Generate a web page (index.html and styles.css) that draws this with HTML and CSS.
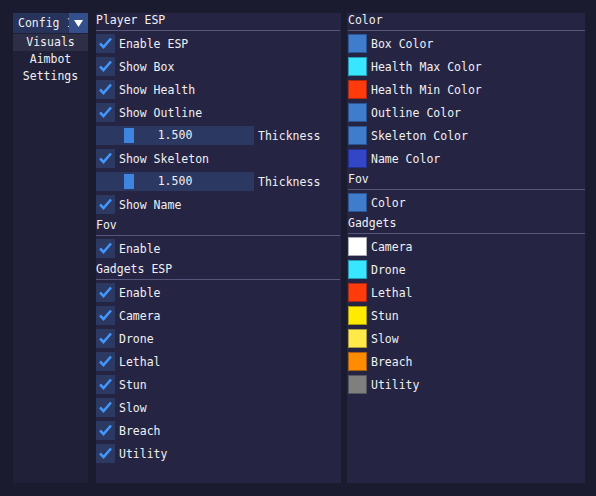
FILE: index.html
```html
<!DOCTYPE html>
<html lang="en">
<head>
    <meta charset="UTF-8">
    <meta name="viewport" content="width=device-width, initial-scale=1.0">
    <title>Menu</title>
    <link rel="stylesheet" href="styles.css">
</head>
<body>
    <div class="window">
        <div class="sidebar">
            <div class="combo">
                <span class="combo-text">Config 1</span>
                <span class="combo-btn">
                    <svg width="9" height="7" viewBox="0 0 9 7"><polygon points="0,0 9,0 4.5,7" fill="#ffffff"/></svg>
                </span>
            </div>
            <ul class="tabs">
                <li class="active">Visuals</li>
                <li>Aimbot</li>
                <li>Settings</li>
            </ul>
        </div>

        <div class="panel">
            <div class="heading">Player ESP</div>
            <div class="sep"></div>
            <div class="row"><span class="check"><svg viewBox="0 0 19 19"><polyline points="4,9.5 7.5,13 15,4.5"/></svg></span>Enable ESP</div>
            <div class="row"><span class="check"><svg viewBox="0 0 19 19"><polyline points="4,9.5 7.5,13 15,4.5"/></svg></span>Show Box</div>
            <div class="row"><span class="check"><svg viewBox="0 0 19 19"><polyline points="4,9.5 7.5,13 15,4.5"/></svg></span>Show Health</div>
            <div class="row"><span class="check"><svg viewBox="0 0 19 19"><polyline points="4,9.5 7.5,13 15,4.5"/></svg></span>Show Outline</div>
            <div class="row">
                <div class="slider"><span class="grab" style="left: 28px"></span>1.500</div>Thickness
            </div>
            <div class="row"><span class="check"><svg viewBox="0 0 19 19"><polyline points="4,9.5 7.5,13 15,4.5"/></svg></span>Show Skeleton</div>
            <div class="row">
                <div class="slider"><span class="grab" style="left: 28px"></span>1.500</div>Thickness
            </div>
            <div class="row"><span class="check"><svg viewBox="0 0 19 19"><polyline points="4,9.5 7.5,13 15,4.5"/></svg></span>Show Name</div>

            <div class="heading">Fov</div>
            <div class="sep"></div>
            <div class="row"><span class="check"><svg viewBox="0 0 19 19"><polyline points="4,9.5 7.5,13 15,4.5"/></svg></span>Enable</div>

            <div class="heading">Gadgets ESP</div>
            <div class="sep"></div>
            <div class="row"><span class="check"><svg viewBox="0 0 19 19"><polyline points="4,9.5 7.5,13 15,4.5"/></svg></span>Enable</div>
            <div class="row"><span class="check"><svg viewBox="0 0 19 19"><polyline points="4,9.5 7.5,13 15,4.5"/></svg></span>Camera</div>
            <div class="row"><span class="check"><svg viewBox="0 0 19 19"><polyline points="4,9.5 7.5,13 15,4.5"/></svg></span>Drone</div>
            <div class="row"><span class="check"><svg viewBox="0 0 19 19"><polyline points="4,9.5 7.5,13 15,4.5"/></svg></span>Lethal</div>
            <div class="row"><span class="check"><svg viewBox="0 0 19 19"><polyline points="4,9.5 7.5,13 15,4.5"/></svg></span>Stun</div>
            <div class="row"><span class="check"><svg viewBox="0 0 19 19"><polyline points="4,9.5 7.5,13 15,4.5"/></svg></span>Slow</div>
            <div class="row"><span class="check"><svg viewBox="0 0 19 19"><polyline points="4,9.5 7.5,13 15,4.5"/></svg></span>Breach</div>
            <div class="row"><span class="check"><svg viewBox="0 0 19 19"><polyline points="4,9.5 7.5,13 15,4.5"/></svg></span>Utility</div>
        </div>

        <div class="panel colors">
            <div class="heading">Color</div>
            <div class="sep"></div>
            <div class="row"><span class="swatch" style="background: #3f7ccb"></span>Box Color</div>
            <div class="row"><span class="swatch" style="background: #38e6ff"></span>Health Max Color</div>
            <div class="row"><span class="swatch" style="background: #ff3b0c"></span>Health Min Color</div>
            <div class="row"><span class="swatch" style="background: #3f7ccb"></span>Outline Color</div>
            <div class="row"><span class="swatch" style="background: #3f7ccb"></span>Skeleton Color</div>
            <div class="row"><span class="swatch" style="background: #3346c8"></span>Name Color</div>

            <div class="heading">Fov</div>
            <div class="sep"></div>
            <div class="row"><span class="swatch" style="background: #3f7ccb"></span>Color</div>

            <div class="heading">Gadgets</div>
            <div class="sep"></div>
            <div class="row"><span class="swatch" style="background: #ffffff"></span>Camera</div>
            <div class="row"><span class="swatch" style="background: #38e6ff"></span>Drone</div>
            <div class="row"><span class="swatch" style="background: #ff3b0c"></span>Lethal</div>
            <div class="row"><span class="swatch" style="background: #ffea00"></span>Stun</div>
            <div class="row"><span class="swatch" style="background: #ffea4a"></span>Slow</div>
            <div class="row"><span class="swatch" style="background: #ff8c00"></span>Breach</div>
            <div class="row"><span class="swatch" style="background: #7f7f7f"></span>Utility</div>
        </div>
    </div>
</body>
</html>
```

FILE: styles.css
```css
body {
    margin: 0;
    background-color: #1b1b30;
    color: #f0f0f2;
    font-family: "DejaVu Sans Mono", monospace;
    font-size: 11.5px;
}

.window {
    display: flex;
    height: 496px;
    box-sizing: border-box;
    padding: 13px 11px 13px 13px;
}

/* left column: config picker + tab list */
.sidebar {
    width: 75px;
    display: flex;
    flex-direction: column;
    margin-right: 8px;
}

.combo {
    display: flex;
    height: 20px;
    background-color: #27335a;
}

.combo-text {
    flex: 1;
    overflow: hidden;
    white-space: nowrap;
    padding-left: 5px;
    line-height: 20px;
}

.combo-btn {
    width: 19px;
    display: flex;
    align-items: center;
    justify-content: center;
    background-color: #34508c;
}

.tabs {
    flex: 1;
    list-style-type: none;
    margin: 0;
    padding: 1px 0 0 0;
    background-color: #202039;
}

.tabs li {
    height: 17px;
    line-height: 17px;
    text-align: center;
}

.tabs li.active {
    background-color: #2e2e47;
}

/* settings columns */
.panel {
    width: 245px;
    display: flex;
    flex-direction: column;
    background-color: #262443;
}

.panel.colors {
    width: 237px;
    margin-left: 6px;
    padding-left: 1px;
}

.heading {
    height: 13px;
    line-height: 13px;
    padding-top: 1px;
    margin-bottom: 3px;
    white-space: nowrap;
}

.sep {
    height: 1px;
    background-color: #56557a;
    margin-bottom: 3px;
    margin-right: 1px;
}

.colors .sep {
    margin-right: 0;
}

.row {
    display: flex;
    align-items: center;
    gap: 4px;
    height: 19px;
    margin-bottom: 4px;
    white-space: nowrap;
}

.check {
    width: 19px;
    height: 19px;
    background-color: #2b3963;
}

.check svg {
    display: block;
    width: 19px;
    height: 19px;
    fill: none;
    stroke: #4296fa;
    stroke-width: 2.6;
}

.swatch {
    width: 19px;
    height: 19px;
    box-sizing: border-box;
    box-shadow: inset 0 0 0 1px rgba(10, 10, 40, 0.35);
}

.slider {
    position: relative;
    width: 158px;
    height: 19px;
    line-height: 19px;
    text-align: center;
    background-color: #2a3862;
}

.grab {
    position: absolute;
    top: 2px;
    width: 10px;
    height: 15px;
    background-color: #3d85e0;
}
```
